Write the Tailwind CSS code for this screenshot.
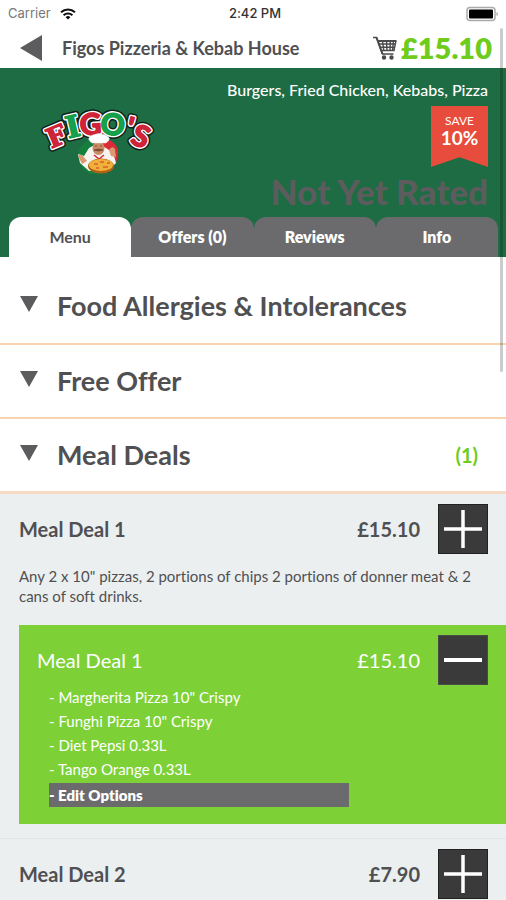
<!DOCTYPE html>
<html lang="en">
<head>
  <meta charset="UTF-8" />
  <meta name="viewport" content="width=device-width, initial-scale=1.0" />
  <title>Figos Pizzeria &amp; Kebab House</title>
  <script src="https://cdn.jsdelivr.net/npm/@tailwindcss/browser@4"></script>
</head>
<body class="relative min-h-screen bg-[#ebeff0] font-[Lato,sans-serif] text-[#505052] overflow-x-hidden [font-variant-ligatures:none]">

  <!-- Status bar -->
  <div class="grid grid-cols-3 items-center h-7 px-2 bg-white font-[Inter,sans-serif] text-[13px] text-[#333]">
    <div class="flex items-center gap-2 text-[#777]">
      <span>Carrier</span>
      <svg class="w-[18px] h-3" viewBox="0 0 16 12" fill="none" stroke="#111" stroke-width="2">
        <path d="M1 4.2a10.2 10.2 0 0 1 14 0M3.6 7.2a6.4 6.4 0 0 1 8.800 0" />
        <path d="M8 11.6 5.600 9.2a3.5 3.5 0 0 1 4.800 0z" fill="#111" stroke="none" />
      </svg>
    </div>
    <div class="text-center font-medium pl-1">2:42 PM</div>
    <svg class="justify-self-end w-8 h-4" viewBox="0 0 32 16">
      <rect x="1" y="1.500" width="28" height="13" rx="3" fill="#fff" stroke="#aaa" stroke-width="1.500" />
      <rect x="3" y="3.500" width="24" height="9" rx="1" fill="#000" />
      <path d="M30.500 6v4q1.500-.5 1.500-2t-1.500-2" fill="#aaa" />
    </svg>
  </div>

  <!-- Header -->
  <header class="flex items-center h-10 pl-5 pr-[14px] bg-white">
    <button aria-label="Back" class="mr-5">
      <svg class="w-[22px] h-[26px]" viewBox="0 0 22 26"><path d="M0 13 22 0v26z" fill="#5c5c5e" /></svg>
    </button>
    <h1 class="flex-1 text-lg font-bold whitespace-nowrap">Figos Pizzeria &amp; Kebab House</h1>
    <a href="#" class="flex items-center gap-1 text-[29px] leading-9 font-extrabold text-[#6fcc1c]">
      <svg class="w-6 h-6" viewBox="0 0 24 24" fill="none" stroke="#4a4a4c" stroke-width="1.400">
        <path d="M0 1.500h3.500L9.500 18h11M5 5h18l-2 9.500H8.200M6 8h16.500M7 11.200h15M9.500 5l1.300 9.500M13.500 5l.5 9.500M17.300 5l-.3 9.500M20.500 5l-1 9.500" />
        <path d="M3.500 1.500 9.500 18M5 5h18" stroke-width="2" />
        <circle cx="11" cy="21.500" r="1.500" fill="#4a4a4c" />
        <circle cx="18.500" cy="21.500" r="1.500" fill="#4a4a4c" />
      </svg>
      <span>£15.10</span>
    </a>
  </header>

  <!-- Restaurant banner -->
  <section class="bg-[#1e6c43]">
    <div class="flex justify-between h-[149px] pl-10 pr-[18px]">
      <svg class="w-[118px] h-[74px] mt-8 shrink-0" viewBox="-4 -4 118 74" role="img" aria-label="Figo's">
        <!-- chef and pizza -->
        <path d="M52 35a19 19 0 0 0-18 14q0 15 12 21h12z" fill="#15803d" />
        <path d="M60 34q14 4 14 15 0 14-15 20z" fill="#dc2a36" />
        <!-- lettering: dark rim, white outline, then the coloured faces -->
        <g font-family="Lato, sans-serif" font-weight="900" font-size="30" text-anchor="middle" stroke-linejoin="round" paint-order="stroke">
          <g fill="#111" stroke="#0c1f16" stroke-width="7" aria-hidden="true">
            <text transform="translate(16 41) rotate(-23)" font-family="DejaVu Serif, serif" font-size="27">F</text>
            <text transform="translate(31 33) rotate(-13)" font-family="DejaVu Serif, serif">I</text>
            <text transform="translate(47 31) rotate(-3)">G</text>
            <text transform="translate(68 31) rotate(5)">O</text>
            <text transform="translate(83 34) rotate(15)">'</text>
            <text transform="translate(93 42) rotate(22)">S</text>
          </g>
          <g stroke="#fff" stroke-width="4" aria-hidden="true">
            <text transform="translate(16 41) rotate(-23)" font-family="DejaVu Serif, serif" font-size="27">F</text>
            <text transform="translate(31 33) rotate(-13)" font-family="DejaVu Serif, serif">I</text>
            <text transform="translate(47 31) rotate(-3)">G</text>
            <text transform="translate(68 31) rotate(5)">O</text>
            <text transform="translate(83 34) rotate(15)">'</text>
            <text transform="translate(93 42) rotate(22)">S</text>
          </g>
          <g stroke="#cf2338" fill="#cf2338" stroke-width="1.200">
            <text transform="translate(16 41) rotate(-23)" font-family="DejaVu Serif, serif" font-size="27">F</text>
            <text transform="translate(31 33) rotate(-13)" font-family="DejaVu Serif, serif" fill="#16a04a" stroke="#16a04a">I</text>
            <text transform="translate(47 31) rotate(-3)">G</text>
            <text transform="translate(68 31) rotate(5)" fill="#16a04a" stroke="#16a04a">O</text>
            <text transform="translate(83 34) rotate(15)">'</text>
            <text transform="translate(93 42) rotate(22)">S</text>
          </g>
        </g>
        <path d="M45 44q9-7 17 0 8 4 10 15l-8 8H45l-9-8-2-9 6 2z" fill="#f7f4f0" />
        <path d="M34 52q2-3 5 0l4 5-5 3zM65 46q3-5 6-1l1 8-5-1z" fill="#d99a70" />
        <ellipse cx="54.500" cy="44" rx="6" ry="7" fill="#c98a64" />
        <path d="M50 46q4.500-2 9 0-4.500 2-9 0M51 42h2M56 42h2" fill="#7a4a34" stroke="#7a4a34" stroke-width=".8" />
        <path d="M50 51l5 4 5-4" fill="none" stroke="#dc2a36" stroke-width="1.500" />
        <path d="M48 39q-7-5 1-8 6-3 12 0 8 3 1 8z" fill="#fff" stroke="#d6dcd8" stroke-width=".6" />
        <ellipse cx="57" cy="62" rx="13" ry="7.500" fill="#b45f16" />
        <ellipse cx="57" cy="61" rx="12" ry="6" fill="#efb13a" />
        <path d="M50 60h4M56 58h4M59 63h5M52 64h3M63 59h3" stroke="#d6602a" stroke-width="1.500" />
      </svg>
      <div class="flex flex-col items-end pt-3 text-white">
        <p class="text-base leading-5 font-medium">Burgers, Fried Chicken, Kebabs, Pizza</p>
        <div class="w-[57px] h-[61px] mt-[6px] pt-2 bg-[#e74c3c] text-center [clip-path:polygon(0_0,100%_0,100%_100%,50%_84%,0_100%)]">
          <p class="text-xs leading-[14px]">SAVE</p>
          <p class="text-[19px] leading-5 font-bold">10%</p>
        </div>
        <p class="mt-1 text-[35px] leading-10 font-black text-[#5c5c5e]">Not Yet Rated</p>
      </div>
    </div>
    <nav class="grid grid-cols-4 h-10 pl-[9px] pr-2 text-base font-extrabold text-white">
      <button class="rounded-t-xl bg-white text-[#505052] font-bold">Menu</button>
      <button class="rounded-t-xl bg-[#6b6b6d]">Offers (0)</button>
      <button class="rounded-t-xl bg-[#6b6b6d]">Reviews</button>
      <button class="rounded-t-xl bg-[#6b6b6d]">Info</button>
    </nav>
  </section>

  <main>
    <!-- Categories -->
    <button class="flex items-center w-full h-[88px] pt-3 pl-5 pr-7 bg-white border-b-2 border-[#f8d3ae] text-left">
      <svg class="w-[18px] h-4 mr-[19px] mb-1" viewBox="0 0 18 16"><path d="M0 0h18L9 16z" fill="#5c5c5e" /></svg>
      <span class="text-[27px] font-bold">Food Allergies &amp; Intolerances</span>
    </button>
    <button class="flex items-center w-full h-[74px] pl-5 pr-7 bg-white border-b-2 border-[#f8d3ae] text-left">
      <svg class="w-[18px] h-4 mr-[19px] mb-1" viewBox="0 0 18 16"><path d="M0 0h18L9 16z" fill="#5c5c5e" /></svg>
      <span class="text-[27px] font-bold">Free Offer</span>
    </button>
    <button class="flex items-center w-full h-[75px] pl-5 pr-7 bg-white border-b-3 border-[#f8d9c4] text-left">
      <svg class="w-[18px] h-4 mr-[19px] mb-1" viewBox="0 0 18 16"><path d="M0 0h18L9 16z" fill="#5c5c5e" /></svg>
      <span class="flex-1 text-[27px] font-bold">Meal Deals</span>
      <span class="text-xl font-bold text-[#6fcc1c]">(1)</span>
    </button>

    <!-- Meal deals -->
    <article class="pt-[10px] pb-[14px] pl-[19px] border-b border-[#e1e5e6]">
      <div class="flex items-center pr-[18px] text-xl font-bold">
        <h2 class="flex-1">Meal Deal 1</h2>
        <span class="mr-[18px]">£15.10</span>
        <button aria-label="Add Meal Deal 1" class="size-[50px] bg-[#3a3a3b] border border-[#222]">
          <svg class="w-full h-full" viewBox="0 0 48 48"><path d="M5 24h38M24 5v38" stroke="#fff" stroke-width="3.500" /></svg>
        </button>
      </div>
      <p class="mt-3 pr-4 text-[15px] leading-5">Any 2 x 10" pizzas, 2 portions of chips 2 portions of donner meat &amp; 2 cans of soft drinks.</p>

      <div class="mt-[19px] pt-[10px] pb-[17px] pl-[18px] bg-[#7dd137] text-white">
        <div class="flex items-center pr-[18px] text-xl">
          <h3 class="flex-1">Meal Deal 1</h3>
          <span class="mr-[18px]">£15.10</span>
          <button aria-label="Remove Meal Deal 1" class="size-[50px] bg-[#3a3a3b] border border-[#4a4a4b]">
            <svg class="w-full h-full" viewBox="0 0 48 48"><path d="M5 24h38" stroke="#fff" stroke-width="4" /></svg>
          </button>
        </div>
        <ul class="w-[300px] ml-3 text-[15px] leading-6">
          <li>- Margherita Pizza 10" Crispy</li>
          <li>- Funghi Pizza 10" Crispy</li>
          <li>- Diet Pepsi 0.33L</li>
          <li>- Tango Orange 0.33L</li>
          <li class="mt-0.5 bg-[#6b6b6d]"><a href="#" class="block font-extrabold">- Edit Options</a></li>
        </ul>
      </div>
    </article>

    <article class="flex items-center pt-[10px] pl-[19px] pr-[18px] text-xl font-bold">
      <h2 class="flex-1">Meal Deal 2</h2>
      <span class="mr-[18px]">£7.90</span>
      <button aria-label="Add Meal Deal 2" class="size-[50px] bg-[#3a3a3b] border border-[#222]">
        <svg class="w-full h-full" viewBox="0 0 48 48"><path d="M5 24h38M24 5v38" stroke="#fff" stroke-width="3.500" /></svg>
      </button>
    </article>
  </main>

  <!-- Scroll indicator -->
  <div class="absolute right-[3px] top-7 w-[3px] h-[344px] rounded-full bg-black/20"></div>
</body>
</html>
